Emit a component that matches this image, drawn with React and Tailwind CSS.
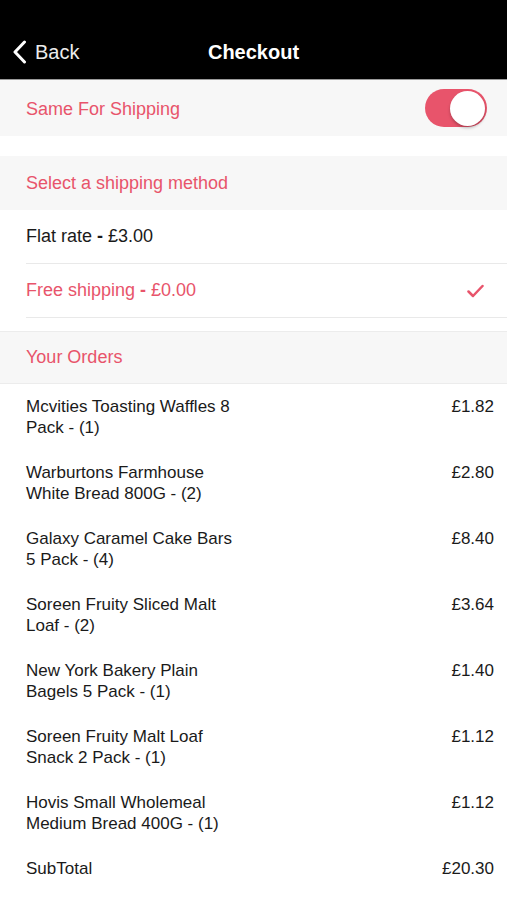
import React from 'react';

const orders = [
    { lines: ['Mcvities Toasting Waffles 8', 'Pack - (1)'], price: '£1.82' },
    { lines: ['Warburtons Farmhouse', 'White Bread 800G - (2)'], price: '£2.80' },
    { lines: ['Galaxy Caramel Cake Bars', '5 Pack - (4)'], price: '£8.40' },
    { lines: ['Soreen Fruity Sliced Malt', 'Loaf - (2)'], price: '£3.64' },
    { lines: ['New York Bakery Plain', 'Bagels 5 Pack - (1)'], price: '£1.40' },
    { lines: ['Soreen Fruity Malt Loaf', 'Snack 2 Pack - (1)'], price: '£1.12' },
    { lines: ['Hovis Small Wholemeal', 'Medium Bread 400G - (1)'], price: '£1.12' },
];

const App = () => {
    return (
        <div className="w-[507px] h-[900px] bg-white overflow-hidden font-['Liberation_Sans',Arial,sans-serif]">
            {/* Nav bar */}
            <header className="bg-black pt-[30px] h-[80px] border-b border-[#9a9a9a]">
                <div className="h-[44px] flex items-center justify-center relative">
                    <div className="absolute left-[12px] top-0 h-full flex items-center gap-[8px] text-white">
                        <svg width="15" height="24" viewBox="0 0 15 24" fill="none">
                            <path d="M12.5 2 L3 12 L12.5 22" stroke="white" strokeWidth="3" strokeLinecap="round" strokeLinejoin="round" />
                        </svg>
                        <span className="text-[20px] text-[#ececec]">Back</span>
                    </div>
                    <h1 className="text-[20px] font-bold text-white">Checkout</h1>
                </div>
            </header>

            {/* Same for shipping */}
            <div className="h-[56px] bg-[#f7f7f7] flex items-center justify-between pl-[26px] pr-[20px]">
                <span className="text-[18px] text-[#e8546b] pt-[3px]">Same For Shipping</span>
                <div className="w-[62px] h-[38px] rounded-full bg-[#e8546b] flex items-center justify-end pr-[2px]">
                    <div className="w-[35px] h-[35px] rounded-full bg-white shadow-[0_2px_3px_rgba(0,0,0,0.25)]"></div>
                </div>
            </div>

            <div className="h-[20px] bg-white"></div>

            {/* Shipping method */}
            <div className="h-[54px] bg-[#f7f7f7] flex items-center pl-[26px]">
                <span className="text-[18px] text-[#e8546b]">Select a shipping method</span>
            </div>
            <div className="pl-[26px]">
                <div className="h-[54px] flex items-center border-b border-[#e9e9e9]">
                    <span className="text-[18px] text-[#1a1a1a]">Flat rate <span className="font-bold">-</span> £3.00</span>
                </div>
                <div className="h-[54px] flex items-center justify-between border-b border-[#e9e9e9] pr-[23px]">
                    <span className="text-[18px] text-[#e8546b]">Free shipping <span className="font-bold">-</span> £0.00</span>
                    <svg width="17" height="14" viewBox="0 0 17 14" fill="none">
                        <path d="M1.5 7.5 L6 12 L15.5 2" stroke="#e8546b" strokeWidth="2.5" strokeLinecap="round" strokeLinejoin="round" />
                    </svg>
                </div>
            </div>

            <div className="h-[13px] bg-white"></div>

            {/* Your orders */}
            <div className="h-[53px] bg-[#f7f7f7] flex items-center pl-[26px] border-t border-b border-[#ececec]">
                <span className="text-[18px] text-[#e8546b]">Your Orders</span>
            </div>

            <div className="pl-[26px] pr-[13px]">
                {orders.map((o, i) => (
                    <div key={i} className="flex justify-between py-[12px] text-[17px] leading-[21px] text-[#1a1a1a]">
                        <div>
                            {o.lines.map((l, j) => (
                                <div key={j}>{l}</div>
                            ))}
                        </div>
                        <div>{o.price}</div>
                    </div>
                ))}
                <div className="flex justify-between py-[12px] text-[17px] leading-[21px] text-[#1a1a1a]">
                    <div>SubTotal</div>
                    <div>£20.30</div>
                </div>
            </div>
        </div>
    );
};

export default App;
